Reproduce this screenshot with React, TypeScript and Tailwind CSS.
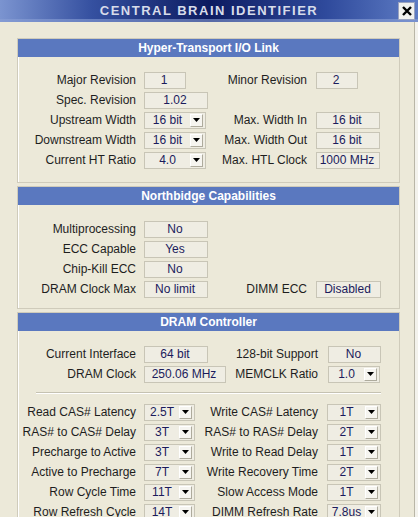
import React from 'react';

type Cell = { v: string; w: string; dd?: boolean };
type RowData = { l?: string; lb?: Cell; r?: string; rb?: Cell };

function Drop() {
  return (
    <div className="w-[13px] h-[13px] flex items-center justify-center bg-[#f6f5f0] border border-t-white border-l-white border-r-[#aeab9d] border-b-[#aeab9d]">
      <svg width="7" height="4" viewBox="0 0 7 4">
        <path d="M0 0h7L3.5 4z" fill="#000" />
      </svg>
    </div>
  );
}

function Box({ v, w, dd }: Cell) {
  return (
    <div className={`${w} h-[17px] flex items-center border border-[#c8c5b6] bg-[#efede3] pr-[2px]`}>
      <span className="flex-1 text-center text-[12px] leading-none text-[#1b1b5c]">{v}</span>
      {dd && <Drop />}
    </div>
  );
}

function Row({ d, slot, rlab, rgap }: { d: RowData; slot: string; rlab: string; rgap: string }) {
  return (
    <div className="flex items-center h-5 text-[12px] text-[#1e1e1e]">
      <div className="w-[118px] text-right whitespace-nowrap">{d.l}</div>
      <div className={`ml-2 ${slot}`}>{d.lb && <Box {...d.lb} />}</div>
      <div className={`${rlab} text-right whitespace-nowrap`}>{d.r}</div>
      <div className={rgap}>{d.rb && <Box {...d.rb} />}</div>
    </div>
  );
}

function Panel({ title, children, body }: { title: string; children: React.ReactNode; body: string }) {
  return (
    <div className="border border-[#cfcbbb] shadow-[inset_1px_1px_0_#ffffff]">
      <div className="h-[18px] bg-[#5a78bf] flex items-center justify-center text-white font-bold text-[12px]">{title}</div>
      <div className={body}>{children}</div>
    </div>
  );
}

const ht: RowData[] = [
  { l: 'Major Revision', lb: { v: '1', w: 'w-[42px]' }, r: 'Minor Revision', rb: { v: '2', w: 'w-[42px]' } },
  { l: 'Spec. Revision', lb: { v: '1.02', w: 'w-[64px]' } },
  { l: 'Upstream Width', lb: { v: '16 bit', w: 'w-[62px]', dd: true }, r: 'Max. Width In', rb: { v: '16 bit', w: 'w-[64px]' } },
  { l: 'Downstream Width', lb: { v: '16 bit', w: 'w-[62px]', dd: true }, r: 'Max. Width Out', rb: { v: '16 bit', w: 'w-[64px]' } },
  { l: 'Current HT Ratio', lb: { v: '4.0', w: 'w-[62px]', dd: true }, r: 'Max. HTL Clock', rb: { v: '1000 MHz', w: 'w-[64px]' } },
];

const nb: RowData[] = [
  { l: 'Multiprocessing', lb: { v: 'No', w: 'w-[64px]' } },
  { l: 'ECC Capable', lb: { v: 'Yes', w: 'w-[64px]' } },
  { l: 'Chip-Kill ECC', lb: { v: 'No', w: 'w-[64px]' } },
  { l: 'DRAM Clock Max', lb: { v: 'No limit', w: 'w-[64px]' }, r: 'DIMM ECC', rb: { v: 'Disabled', w: 'w-[65px]' } },
];

const dramTop: RowData[] = [
  { l: 'Current Interface', lb: { v: '64 bit', w: 'w-[64px]' }, r: '128-bit Support', rb: { v: 'No', w: 'w-[53px]' } },
  { l: 'DRAM Clock', lb: { v: '250.06 MHz', w: 'w-[82px]' }, r: 'MEMCLK Ratio', rb: { v: '1.0', w: 'w-[52px]', dd: true } },
];

const t = (v: string): Cell => ({ v, w: 'w-[51px]', dd: true });
const u = (v: string): Cell => ({ v, w: 'w-[54px]', dd: true });

const dramLow: RowData[] = [
  { l: 'Read CAS# Latency', lb: t('2.5T'), r: 'Write CAS# Latency', rb: u('1T') },
  { l: 'RAS# to CAS# Delay', lb: t('3T'), r: 'RAS# to RAS# Delay', rb: u('2T') },
  { l: 'Precharge to Active', lb: t('3T'), r: 'Write to Read Delay', rb: u('1T') },
  { l: 'Active to Precharge', lb: t('7T'), r: 'Write Recovery Time', rb: u('2T') },
  { l: 'Row Cycle Time', lb: t('11T'), r: 'Slow Access Mode', rb: u('1T') },
  { l: 'Row Refresh Cycle', lb: t('14T'), r: 'DIMM Refresh Rate', rb: u('7.8us') },
];

export default function App() {
  return (
    <div className="w-[418px] h-[517px] overflow-hidden bg-[#f3f2ec] font-['Liberation_Sans',Arial,sans-serif]">
      {/* title bar */}
      <div className="relative h-[22px] flex items-center justify-center bg-[linear-gradient(90deg,#7b94d0_0%,#3550a0_22%,#0c1b60_50%,#2f4a9c_78%,#5e7cc4_100%)]">
        <div className="absolute inset-x-0 bottom-0 h-[3px] bg-[#8aa0d6] opacity-60" />
        <span className="text-[13px] font-bold tracking-[1.5px] text-[#d7dcea]">CENTRAL BRAIN IDENTIFIER</span>
        <div className="absolute right-[3px] top-[2px] w-[17px] h-[18px] bg-[#f1f1ee] border border-[#9aa3c0] flex items-center justify-center">
          <svg width="10" height="10" viewBox="0 0 10 10">
            <path d="M1 1l8 8M9 1l-8 8" stroke="#000" strokeWidth="2.4" />
          </svg>
        </div>
      </div>

      <div className="w-[415px] h-[495px] bg-[#ece9d9] border-r border-[#b9b6a7] pl-[17px] pt-4">
        <div className="w-[383px] flex flex-col gap-[3px]">
          <Panel title="Hyper-Transport I/O Link" body="pt-[13px] pb-3">
            {ht.map((d, i) => (
              <Row key={i} d={d} slot="w-[72px]" rlab="w-[91px]" rgap="ml-[9px]" />
            ))}
          </Panel>

          <Panel title="Northbidge Capabilities" body="pt-[14px] pb-[9px]">
            {nb.map((d, i) => (
              <Row key={i} d={d} slot="w-[72px]" rlab="w-[91px]" rgap="ml-[9px]" />
            ))}
          </Panel>

          <Panel title="DRAM Controller" body="pt-[13px] pb-3">
            {dramTop.map((d, i) => (
              <Row key={i} d={d} slot="w-[86px]" rlab="w-[88px]" rgap="ml-[10px]" />
            ))}
            <div className="mx-[18px] mt-2 mb-[8px] border-t border-[#c5c2b2] border-b border-b-white" />
            {dramLow.map((d, i) => (
              <Row key={i} d={d} slot="w-[54px]" rlab="w-[120px]" rgap="ml-[9px]" />
            ))}
          </Panel>
        </div>
      </div>
    </div>
  );
}
